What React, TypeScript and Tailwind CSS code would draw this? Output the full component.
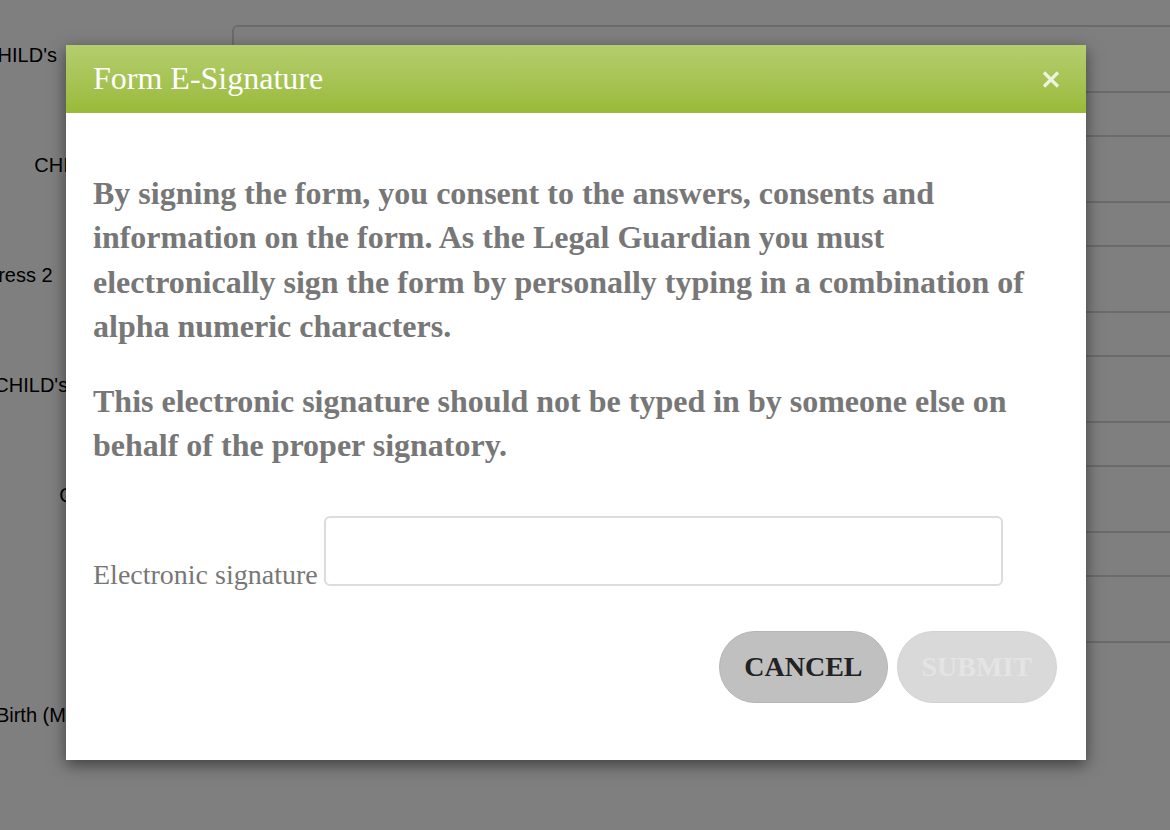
import { useState } from 'react';

const rows = [
  { label: "CHILD's\u00A0\u00A0Home Language", box: 'w-[1000px]' },
  { label: "CHILD's Last Name:", box: 'w-[1000px]' },
  { label: 'Address 2\u00A0\u00A0\u00A0(Apartment/Unit)', box: 'w-[1000px]' },
  { label: "CHILD's Preferred Name", box: 'w-[1000px]' },
  { label: 'Country of Origin:', box: 'w-[1000px]' },
  { label: 'Gender', box: 'w-[1000px]' },
  { label: 'Date of Birth (Month / day / year)', box: 'w-[320px]' },
];

function BackgroundForm() {
  return (
    <div className="flex flex-col gap-[42px] pt-[25px] font-['Liberation_Sans',Arial,sans-serif] text-[20px] text-black">
      {rows.map((r) => (
        <div key={r.label} className="flex items-center">
          <div className="w-[232px] shrink-0 pr-4 text-right whitespace-nowrap flex justify-end -mt-[8px]">
            <span>{r.label}</span>
          </div>
          <div className={`${r.box} h-[68px] shrink-0 border-2 border-[#d6d6d6] rounded-md`} />
        </div>
      ))}
    </div>
  );
}

export default function App() {
  const [signature, setSignature] = useState('');

  return (
    <div className="relative w-[1170px] h-[830px] overflow-hidden bg-white">
      <BackgroundForm />
      <div className="absolute inset-0 bg-black/50" />

      <div className="absolute left-[66px] top-[45px] w-[1020px] bg-white shadow-[0_5px_15px_rgba(0,0,0,0.5)] font-['Liberation_Serif','Times_New_Roman',serif]">
        <div className="h-[68px] flex items-center justify-between pl-[27px] pr-[26px] bg-gradient-to-b from-[#b4ce6e] to-[#9aba38]">
          <h2 className="text-[32px] text-white leading-none -mt-[2px]">Form E-Signature</h2>
          <button type="button" className="text-white/80">
            <svg width="18" height="17" viewBox="0 0 18 17">
              <path d="M2 1.5 L16 15.5 M16 1.5 L2 15.5" stroke="currentColor" strokeWidth="3.2" />
            </svg>
          </button>
        </div>

        <div className="px-[27px] pt-[58px] pb-[57px]">
          <p className="text-[32px] leading-[44.3px] font-bold text-[#777]">
            By signing the form, you consent to the answers, consents and information on the form. As the Legal Guardian you must electronically sign the form by personally typing in a combination of alpha numeric characters.
          </p>
          <p className="mt-[31px] text-[32px] leading-[44.3px] font-bold text-[#777]">
            This electronic signature should not be typed in by someone else on behalf of the proper signatory.
          </p>

          <div className="flex items-end gap-[6px] mt-[48px]">
            <label className="text-[28px] leading-[28px] text-[#777] -mb-[3px]">Electronic signature</label>
            <input
              type="text"
              value={signature}
              onChange={(e) => setSignature(e.target.value)}
              className="w-[679px] h-[70px] border-2 border-[#dcdcdc] rounded-md px-3 text-[24px] outline-none"
            />
          </div>

          <div className="flex justify-end gap-[9px] mt-[45px] pr-[2px]">
            <button
              type="button"
              className="h-[72px] px-[24px] rounded-full bg-[#c0c0c0] border border-[#b5b5b5] text-[28px] font-bold text-[#222]"
            >
              CANCEL
            </button>
            <button
              type="button"
              disabled={!signature.trim()}
              className="h-[72px] px-[24px] rounded-full bg-[#d9d9d9] border border-[#d2d2d2] text-[28px] font-bold text-[#e4e4e4]"
            >
              SUBMIT
            </button>
          </div>
        </div>
      </div>
    </div>
  );
}
